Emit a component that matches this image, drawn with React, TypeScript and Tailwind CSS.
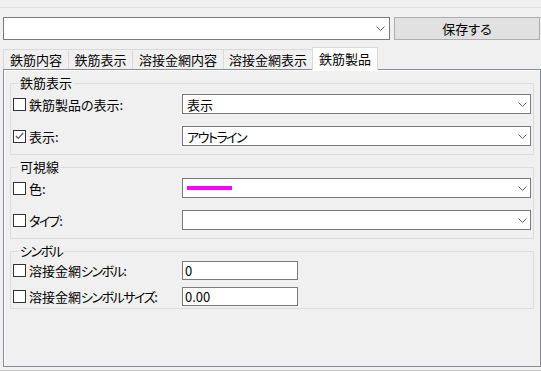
import React from 'react';

const tabs = [
  { label: '鉄筋内容', w: 'w-[66px]' },
  { label: '鉄筋表示', w: 'w-[65px]' },
  { label: '溶接金網内容', w: 'w-[92px]' },
  { label: '溶接金網表示', w: 'w-[90px]' },
];

function Chevron() {
  return (
    <svg width="9" height="5" viewBox="0 0 9 5" className="shrink-0">
      <polyline points="0.5,0.5 4.5,4.5 8.5,0.5" fill="none" stroke="#606060" strokeWidth="1" />
    </svg>
  );
}

function CheckBox({ checked }: { checked?: boolean }) {
  return (
    <span className="w-[13px] h-[13px] border border-[#333] bg-white shrink-0 flex items-center justify-center">
      {checked && (
        <svg width="9" height="8" viewBox="0 0 9 8">
          <polyline points="0.8,4 3.3,6.5 8.2,1" fill="none" stroke="#555" strokeWidth="1.2" />
        </svg>
      )}
    </span>
  );
}

function Combo({ children }: { children?: React.ReactNode }) {
  return (
    <div className="h-[20px] w-[349px] border border-[#7a7a7a] bg-white flex items-center pl-[4px] pr-[3px]">
      <div className="flex-1 flex items-center leading-none">{children}</div>
      <Chevron />
    </div>
  );
}

// katakana in the original font is narrower than Noto's full-width glyphs
function Kana({ children }: { children: React.ReactNode }) {
  return <span className="tracking-[-1.5px]">{children}</span>;
}

function Label({ checked, children }: { checked?: boolean; children: React.ReactNode }) {
  return (
    <div className="flex items-center gap-[3px]">
      <CheckBox checked={checked} />
      <span className="leading-none whitespace-nowrap">{children}</span>
    </div>
  );
}

function Group({ title, className, children }: { title: React.ReactNode; className: string; children: React.ReactNode }) {
  return (
    <div className={`relative border border-[#dcdcdc] ${className}`}>
      <span className="absolute left-[7px] top-[-9px] px-[2px] bg-[#f0f0f0] leading-[16px]">{title}</span>
      {children}
    </div>
  );
}

export default function App() {
  return (
    <div className="w-[541px] h-[371px] bg-[#f0f0f0] text-[13px] text-black font-['Noto_Sans_CJK_JP','Noto_Sans',sans-serif] [font-feature-settings:'palt'] flex flex-col overflow-hidden">
      <div className="h-[7px] shrink-0" />
      <div className="h-px bg-[#e3e3e3] shrink-0" />

      <div className="flex mt-[9px] pl-[3px] gap-[4px] shrink-0">
        <div className="w-[387px] h-[23px] border border-[#7a7a7a] bg-white flex items-center justify-end pr-[4px]">
          <Chevron />
        </div>
        <button className="w-[146px] h-[23px] bg-[#e1e1e1] border border-[#adadad] leading-none">保存する</button>
      </div>

      <div className="flex items-end h-[22px] mt-[7px] pl-[3px] shrink-0">
        {tabs.map((t, i) => (
          <div
            key={t.label}
            className={`${t.w} h-[20px] border border-b-0 border-[#d9d9d9] bg-[#f0f0f0] flex items-center justify-center leading-none ${i > 0 ? '-ml-px' : ''}`}
          >
            {t.label}
          </div>
        ))}
        <div className="w-[66px] h-[23px] -mb-px -ml-px relative z-10 border border-b-0 border-[#d9d9d9] bg-white flex items-center justify-center leading-none pb-[2px]">
          鉄筋製品
        </div>
      </div>

      <div className="ml-[3px] w-[538px] h-[298px] border border-[#898c95] shadow-[inset_1px_1px_0_#fff] pt-[13px] px-[6px] flex flex-col gap-[12px] shrink-0">
        <Group title="鉄筋表示" className="h-[72px]">
          <div className="grid grid-cols-[169px_349px] items-center gap-y-[12px] pl-[2px] pt-[10px]">
            <Label>鉄筋製品の表示:</Label>
            <Combo>表示</Combo>
            <Label checked>表示:</Label>
            <Combo><Kana>アウトライン</Kana></Combo>
          </div>
        </Group>

        <Group title="可視線" className="h-[72px]">
          <div className="grid grid-cols-[169px_349px] items-center gap-y-[12px] pl-[2px] pt-[10px]">
            <Label>色:</Label>
            <Combo>
              <span className="w-[45px] h-[4px] bg-[#ff00ff]" />
            </Combo>
            <Label><Kana>タイプ</Kana>:</Label>
            <Combo />
          </div>
        </Group>

        <Group title={<Kana>シンボル</Kana>} className="h-[58px]">
          <div className="grid grid-cols-[169px_116px] items-center gap-y-[7px] pl-[2px] pt-[9px]">
            <Label>溶接金網<Kana>シンボル</Kana>:</Label>
            <div className="h-[19px] border border-[#7a7a7a] bg-white flex items-center pl-[2px] leading-none">0</div>
            <Label>溶接金網<Kana>シンボルサイズ</Kana>:</Label>
            <div className="h-[19px] border border-[#7a7a7a] bg-white flex items-center pl-[2px] leading-none">0.00</div>
          </div>
        </Group>
      </div>

      <div className="h-[3px] shrink-0" />
      <div className="h-px bg-[#c8c8c8] shrink-0" />
    </div>
  );
}
